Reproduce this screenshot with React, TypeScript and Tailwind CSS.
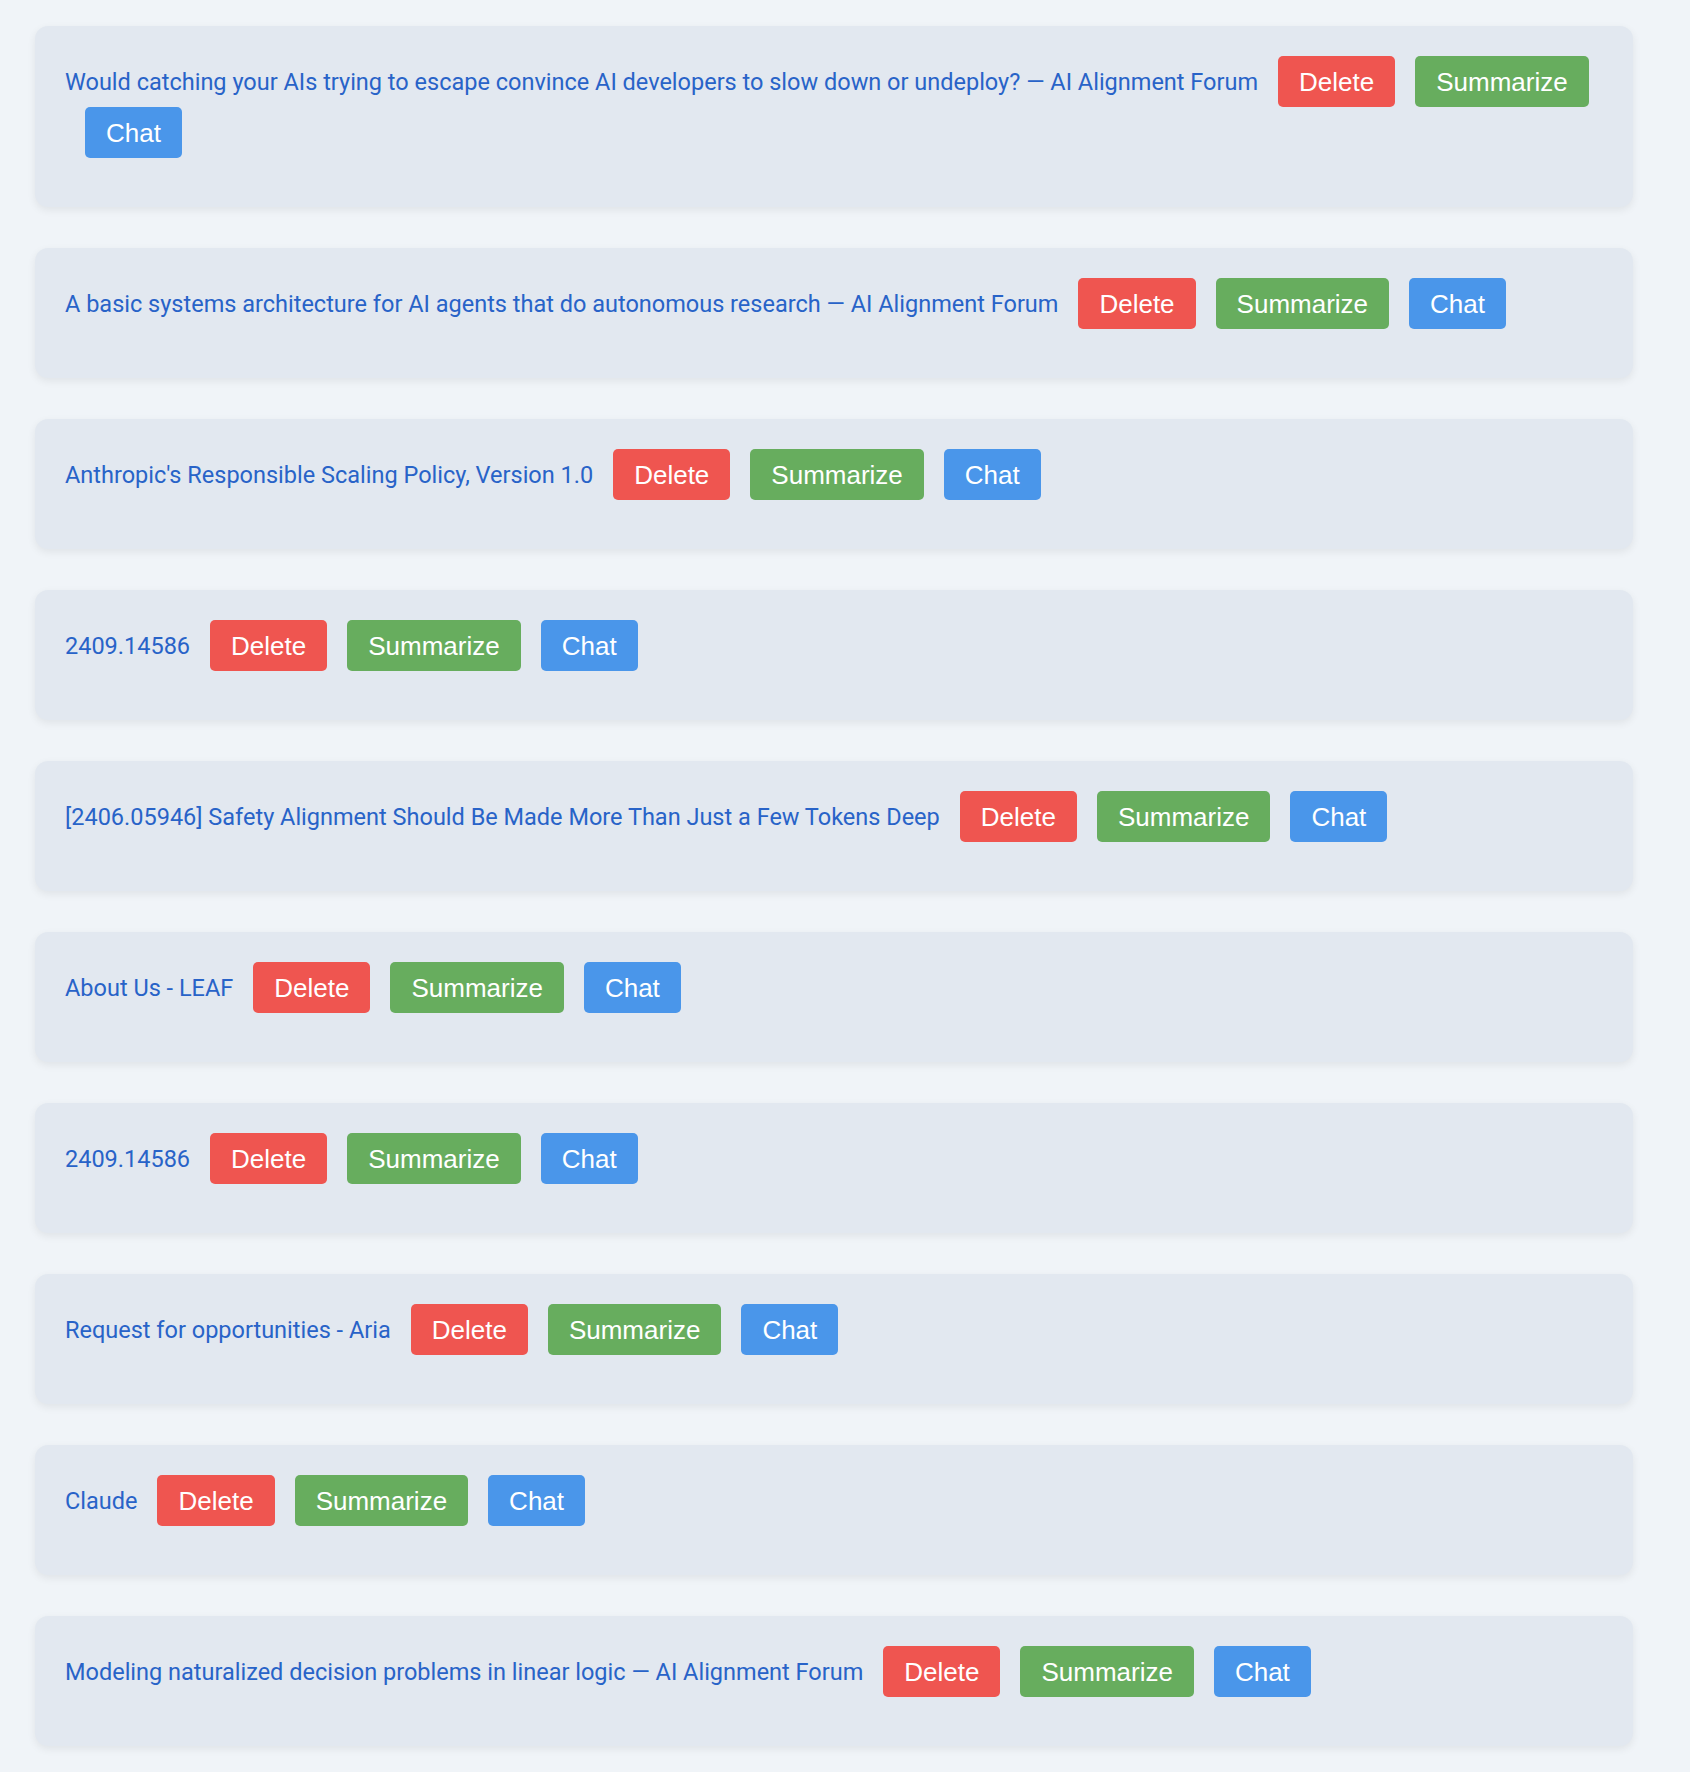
import React from 'react'

const titles = [
    'Would catching your AIs trying to escape convince AI developers to slow down or undeploy? — AI Alignment Forum',
    'A basic systems architecture for AI agents that do autonomous research — AI Alignment Forum',
    "Anthropic's Responsible Scaling Policy, Version 1.0",
    '2409.14586',
    '[2406.05946] Safety Alignment Should Be Made More Than Just a Few Tokens Deep',
    'About Us - LEAF',
    '2409.14586',
    'Request for opportunities - Aria',
    'Claude',
    'Modeling naturalized decision problems in linear logic — AI Alignment Forum',
]

const btn = "ml-5 h-[51px] px-[21px] rounded-[5px] text-white text-[26px] leading-none font-['Liberation_Sans',Arial,sans-serif]"

const App: React.FC = () => {
    return (
        <div className="min-h-[1772px] bg-[#f0f4f8] pt-[26px] pl-[35px] pb-[26px]">
            <div className="w-[1598px] flex flex-col gap-[41px]">
                {titles.map((title, index) => (
                    <div
                        key={index}
                        className="bg-[#e2e8f0] rounded-[13px] p-[30px] shadow-[0_3px_8px_rgba(0,0,0,0.07)]"
                    >
                        <div className="flex flex-wrap items-center">
                            <a
                                href="#"
                                className="text-[#2863c8] text-[23.5px] font-['Roboto',sans-serif] translate-y-[1px]"
                            >
                                {title}
                            </a>
                            <button className={`${btn} bg-[#ef5550]`}>Delete</button>
                            <button className={`${btn} bg-[#67ad5e]`}>Summarize</button>
                            <button className={`${btn} bg-[#4a96ea]`}>Chat</button>
                        </div>
                        {/* summary slot */}
                        <div className="h-[19px]" />
                    </div>
                ))}
            </div>
        </div>
    )
}

export default App
